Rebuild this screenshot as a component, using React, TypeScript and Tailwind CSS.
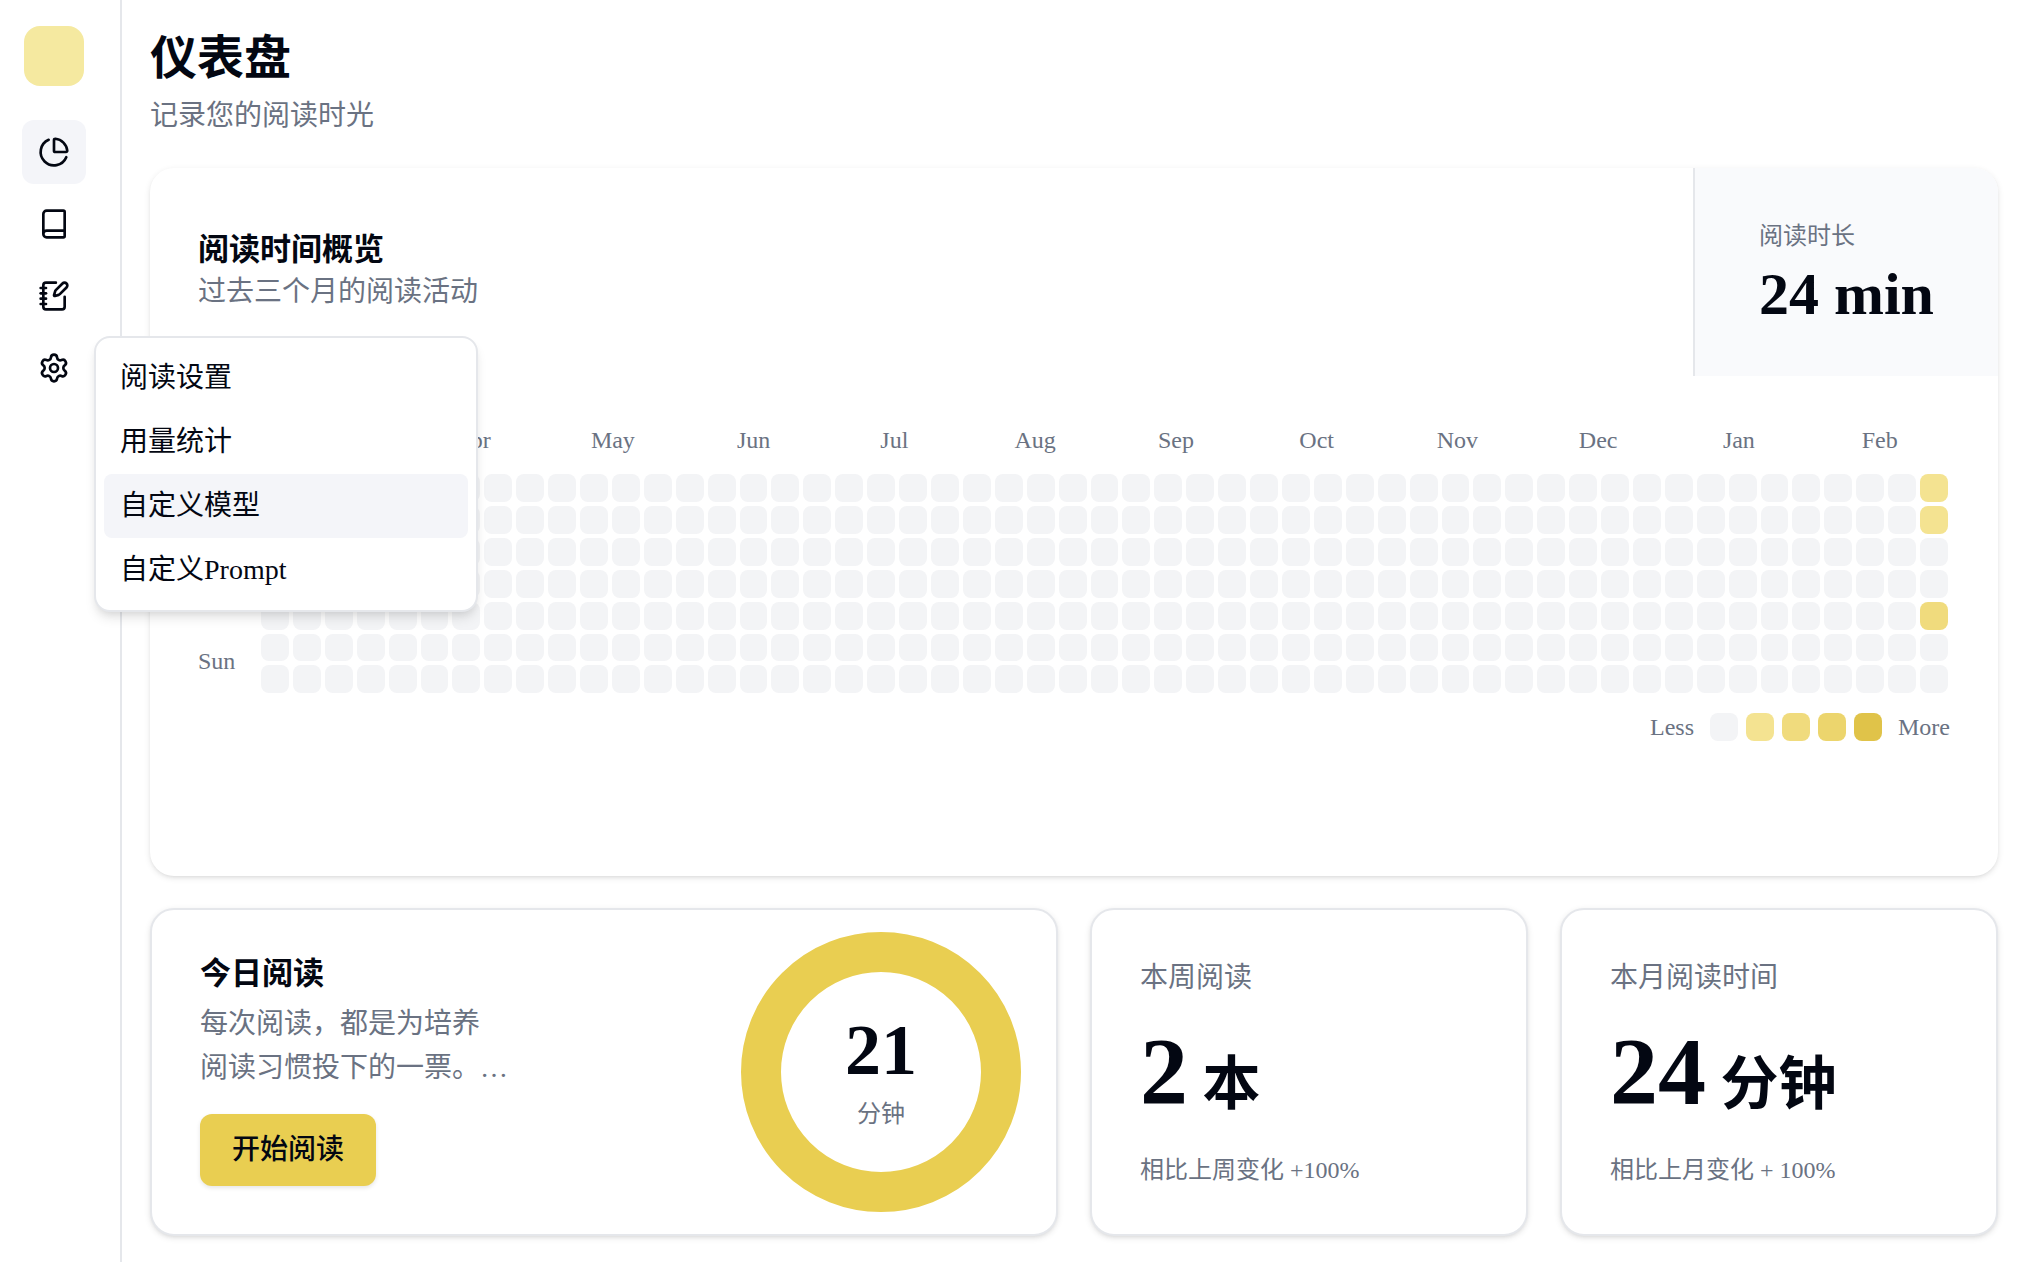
import { useState } from "react";
import { Book, ChartPie, NotebookPen, Settings } from "lucide-react";

const months = ["Mar", "Apr", "May", "Jun", "Jul", "Aug", "Sep", "Oct", "Nov", "Dec", "Jan", "Feb"];
const levels = ["bg-[#f3f4f6]", "bg-[#f4e391]", "bg-[#f0db7d]", "bg-[#ecd56d]", "bg-[#e0c349]"];

const WEEKS = 53;
const activity: Record<number, number> = {
  [(WEEKS - 1) * 7]: 1,
  [(WEEKS - 1) * 7 + 1]: 1,
  [(WEEKS - 1) * 7 + 4]: 2,
};
const days = Array.from({ length: WEEKS * 7 }, (_, i) => activity[i] ?? 0);

const menuItems = ["阅读设置", "用量统计", "自定义模型", "自定义Prompt"];

const navButton = "flex size-16 items-center justify-center rounded-xl";

function Sidebar() {
  const [active, setActive] = useState(2);
  return (
    <aside className="flex w-[122px] shrink-0 flex-col border-r-2 border-gray-200 pl-[22px] pt-[26px]">
      <div className="ml-[2px] size-[60px] rounded-2xl bg-[#f5e9a0]" />
      <nav className="mt-[34px] flex flex-col gap-2">
        <button type="button" aria-label="仪表盘" className={navButton + " bg-[#f4f5f9]"}>
          <ChartPie size={32} />
        </button>
        <button type="button" aria-label="书架" className={navButton}>
          <Book size={32} />
        </button>
        <button type="button" aria-label="笔记" className={navButton}>
          <NotebookPen size={32} />
        </button>
        <div className="relative">
          <button type="button" aria-label="设置" aria-haspopup="menu" aria-expanded="true" className={navButton}>
            <Settings size={32} />
          </button>
          <div
            role="menu"
            className="absolute left-[72px] top-0 z-10 w-96 rounded-2xl border-2 border-gray-200 bg-white p-2 shadow-[0_8px_12px_-2px_rgb(0_0_0/0.1),0_4px_8px_-4px_rgb(0_0_0/0.1)]"
          >
            {menuItems.map((item, i) => (
              <button
                key={item}
                type="button"
                role="menuitem"
                onMouseEnter={() => setActive(i)}
                className={
                  "flex h-16 w-full items-center rounded-lg px-4 text-[28px] " +
                  (i === active ? "bg-[#f4f5f9]" : "")
                }
              >
                {item}
              </button>
            ))}
          </div>
        </div>
      </nav>
    </aside>
  );
}

function Heatmap() {
  return (
    <div className="px-12 pt-12">
      <div className="grid grid-cols-[63px_1fr]">
        <div />
        <div className="grid h-8 grid-cols-12 items-center text-center text-2xl leading-8 text-gray-500">
          {months.map((m) => (
            <span key={m}>{m}</span>
          ))}
        </div>
        <div className="flex flex-col justify-end pb-4 text-2xl leading-8 text-gray-500">
          <span>Sun</span>
        </div>
        <div className="mt-[18px] grid grid-flow-col grid-cols-[repeat(53,minmax(0,1fr))] grid-rows-7 gap-1 pr-[2px]">
          {days.map((level, i) => (
            <div key={i} className={"aspect-square rounded-lg " + levels[level]} />
          ))}
        </div>
      </div>
      <div className="mt-[18px] flex items-center justify-end gap-4 text-2xl leading-8 text-gray-500">
        <span>Less</span>
        <div className="flex gap-2">
          {levels.map((c) => (
            <div key={c} className={"size-7 rounded-lg " + c} />
          ))}
        </div>
        <span>More</span>
      </div>
    </div>
  );
}

function Overview() {
  return (
    <section className="min-h-[708px] rounded-3xl bg-white shadow-[0_2px_6px_rgb(0_0_0/0.1),0_2px_4px_-2px_rgb(0_0_0/0.1)]">
      <div className="flex h-[208px] justify-between">
        <div className="flex flex-col justify-center pl-12">
          <h2 className="text-[31px] font-bold leading-10">阅读时间概览</h2>
          <p className="text-[28px] leading-11 text-gray-500">过去三个月的阅读活动</p>
        </div>
        <div className="flex flex-col justify-center rounded-tr-3xl border-l-2 border-gray-200 bg-[#f9fafc] px-16">
          <span className="text-2xl leading-8 text-gray-500">阅读时长</span>
          <span className="mt-4 pb-1 text-6xl leading-[52px] font-bold">24 min</span>
        </div>
      </div>
      <Heatmap />
    </section>
  );
}

const card =
  "rounded-3xl border-2 border-gray-200 bg-white px-12 shadow-[0_2px_6px_rgb(0_0_0/0.1),0_2px_4px_-2px_rgb(0_0_0/0.1)]";

function Stat({ label, value, unit, note }: { label: string; value: string; unit: string; note: string }) {
  return (
    <section className={card + " flex flex-col justify-between py-12"}>
      <h3 className="text-[28px] leading-10 text-gray-500">{label}</h3>
      <p className="pb-2 text-8xl font-bold">
        {value}
        <span className="text-[58px]"> {unit}</span>
      </p>
      <p className="text-2xl text-gray-500">{note}</p>
    </section>
  );
}

function Today() {
  return (
    <section className={card + " col-span-2 flex items-center justify-between pr-[35px]"}>
      <div className="pb-1">
        <h2 className="text-[31px] font-bold leading-10">今日阅读</h2>
        <p className="mt-2 text-[28px] leading-11 text-gray-500">
          每次阅读，都是为培养
          <br />
          阅读习惯投下的一票。…
        </p>
        <button
          type="button"
          className="mt-6 h-[72px] rounded-xl bg-[#e9ce51] px-8 text-[28px] font-medium shadow-[0_2px_4px_rgb(0_0_0/0.1)]"
        >
          开始阅读
        </button>
      </div>
      <div className="flex size-[280px] flex-col items-center justify-center gap-3 rounded-full border-[40px] border-[#e9ce51]">
        <span className="text-7xl font-bold">21</span>
        <span className="text-2xl text-gray-500">分钟</span>
      </div>
    </section>
  );
}

export default function App() {
  return (
    <div className="flex min-h-screen bg-white font-['Liberation_Serif','Noto_Sans_CJK_SC',serif] text-[#030712]">
      <Sidebar />
      <main className="min-w-0 flex-1 pb-[26px] pl-7 pr-[26px] pt-7">
        <h1 className="text-[47px] font-bold leading-[60px]">仪表盘</h1>
        <p className="mt-2 text-[28px] leading-10 text-gray-500">记录您的阅读时光</p>
        <div className="mt-8">
          <Overview />
        </div>
        <div className="mt-8 grid min-h-[328px] grid-cols-4 gap-8">
          <Today />
          <Stat label="本周阅读" value="2" unit="本" note="相比上周变化 +100%" />
          <Stat label="本月阅读时间" value="24" unit="分钟" note="相比上月变化 + 100%" />
        </div>
      </main>
    </div>
  );
}
